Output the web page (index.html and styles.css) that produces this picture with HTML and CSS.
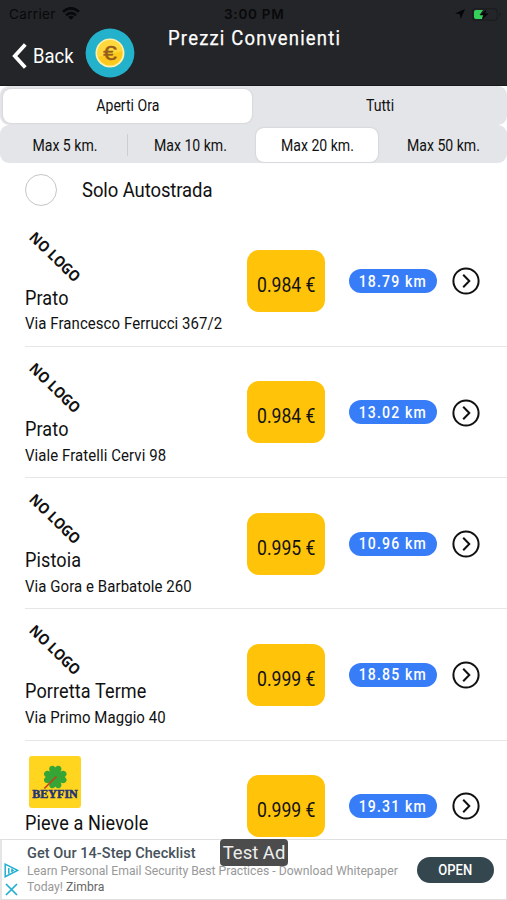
FILE: index.html
```html
<!DOCTYPE html>
<html lang="it">
<head>
<meta charset="utf-8">
<title>Prezzi Convenienti</title>
<link rel="stylesheet" href="styles.css">
</head>
<body>
<div class="app">
  <header class="header">
    <div class="status">
      <span class="carrier">Carrier</span>
      <svg class="wifi" width="18" height="13" viewBox="0 0 18 13"><g fill="none" stroke="#08090a" stroke-width="2.7"><path d="M1 4.8Q9-2.2 17 4.8"/><path d="M4 8.2Q9 3.8 14 8.2"/></g><path d="M9 12.8 6 9.9Q9 7.6 12 9.9Z" fill="#08090a"/></svg>
      <span class="clock">3:00 PM</span>
      <svg class="loc" width="10" height="10" viewBox="0 0 10 10"><path d="M10 0 5.7 10 4.8 5.2 0 4.4Z" fill="#050607"/></svg>
      <svg class="battery" width="29" height="13" viewBox="0 0 29 13"><rect x=".6" y=".6" width="24.5" height="11.6" rx="3" fill="none" stroke="#1b1d1f" stroke-width="1.1"/><path d="M27 4.2Q30 6.4 27 8.7Z" fill="#1b1d1f"/><path d="M4 2H11L7.5 7H11L10 11H4Q2 11 2 9V4Q2 2 4 2Z" fill="#35d05a"/><path d="M14.5 1.5 8 7.3H11.6L10.2 11.6 16.7 5.5H13Z" fill="#050607"/></svg>
    </div>
    <div class="nav">
      <svg class="chevron" width="17" height="28" viewBox="0 0 17 28"><path d="M14.3 2.5 3.8 14 14.3 25.5" fill="none" stroke="#fff" stroke-width="3.8"/></svg>
      <span class="back cond">Back</span>
      <svg class="coin" width="50" height="50" viewBox="0 0 50 50"><circle cx="25" cy="25" r="24.4" fill="#23b1cb"/><circle cx="25" cy="25" r="14.5" fill="#fff0ad"/><circle cx="25" cy="25" r="12.6" fill="#fdc91c"/><path d="M12.5 23A12.6 12.6 0 0 1 37.5 23L13 29Z" fill="#ffd83b"/><text x="25" y="32" text-anchor="middle" textLength="13.5" lengthAdjust="spacingAndGlyphs" class="euro">€</text></svg>
      <h1 class="title cond">Prezzi Convenienti</h1>
    </div>
  </header>
  <div class="segments two">
    <div class="seg on"><span class="cond">Aperti Ora</span></div>
    <div class="seg"><span class="cond">Tutti</span></div>
  </div>
  <div class="segments four">
    <div class="seg line"><span class="cond">Max 5 km.</span></div>
    <div class="seg"><span class="cond">Max 10 km.</span></div>
    <div class="seg on"><span class="cond">Max 20 km.</span></div>
    <div class="seg"><span class="cond">Max 50 km.</span></div>
  </div>
  <div class="option"><span class="radio"></span><span class="option-text cond">Solo Autostrada</span></div>
  <main class="list">
    <article class="row">
      <div class="station"><svg class="logo" viewBox="0 0 54 54"><text class="nologo" transform="translate(0.3 8.6) rotate(44)" textLength="64" lengthAdjust="spacingAndGlyphs">NO LOGO</text></svg><div class="name"><span class="cond">Prato</span></div><div class="addr"><span class="cond">Via Francesco Ferrucci 367/2</span></div></div>
      <div class="price"><span class="cond">0.984 €</span></div><div class="dist"><span class="cond">18.79 km</span></div>
      <svg class="go" viewBox="0 0 28 28"><circle cx="14" cy="14" r="12.6"/><path d="M11.2 7.8 17.3 14 11.2 20.2"/></svg>
    </article>
    <article class="row">
      <div class="station"><svg class="logo" viewBox="0 0 54 54"><text class="nologo" transform="translate(0.3 8.6) rotate(44)" textLength="64" lengthAdjust="spacingAndGlyphs">NO LOGO</text></svg><div class="name"><span class="cond">Prato</span></div><div class="addr"><span class="cond">Viale Fratelli Cervi 98</span></div></div>
      <div class="price"><span class="cond">0.984 €</span></div><div class="dist"><span class="cond">13.02 km</span></div>
      <svg class="go" viewBox="0 0 28 28"><circle cx="14" cy="14" r="12.6"/><path d="M11.2 7.8 17.3 14 11.2 20.2"/></svg>
    </article>
    <article class="row">
      <div class="station"><svg class="logo" viewBox="0 0 54 54"><text class="nologo" transform="translate(0.3 8.6) rotate(44)" textLength="64" lengthAdjust="spacingAndGlyphs">NO LOGO</text></svg><div class="name"><span class="cond">Pistoia</span></div><div class="addr"><span class="cond">Via Gora e Barbatole 260</span></div></div>
      <div class="price"><span class="cond">0.995 €</span></div><div class="dist"><span class="cond">10.96 km</span></div>
      <svg class="go" viewBox="0 0 28 28"><circle cx="14" cy="14" r="12.6"/><path d="M11.2 7.8 17.3 14 11.2 20.2"/></svg>
    </article>
    <article class="row">
      <div class="station"><svg class="logo" viewBox="0 0 54 54"><text class="nologo" transform="translate(0.3 8.6) rotate(44)" textLength="64" lengthAdjust="spacingAndGlyphs">NO LOGO</text></svg><div class="name"><span class="cond">Porretta Terme</span></div><div class="addr"><span class="cond">Via Primo Maggio 40</span></div></div>
      <div class="price"><span class="cond">0.999 €</span></div><div class="dist"><span class="cond">18.85 km</span></div>
      <svg class="go" viewBox="0 0 28 28"><circle cx="14" cy="14" r="12.6"/><path d="M11.2 7.8 17.3 14 11.2 20.2"/></svg>
    </article>
    <article class="row">
      <div class="station"><svg class="logo" viewBox="0 0 54 54"><rect x="1" y="1" width="52" height="52" rx="3" fill="#ffd520"/><g transform="translate(27.3 22)" fill="#35a536"><path id="leaf" d="M0 1C-2-2-7-5-6-9C-5-12-1.500-12 0-9.500C1.500-12 5-12 6-9C7-5 2-2 0 1Z"/><use href="#leaf" transform="rotate(90)"/><use href="#leaf" transform="rotate(180)"/><use href="#leaf" transform="rotate(270)"/></g><path d="M16.300 33.500 28.500 21.500" stroke="#c4401f" stroke-width="1.600"/><text class="beyfin" x="4.300" y="42.800" textLength="45.500" lengthAdjust="spacingAndGlyphs">BEYFIN</text></svg><div class="name"><span class="cond">Pieve a Nievole</span></div></div>
      <div class="price"><span class="cond">0.999 €</span></div><div class="dist"><span class="cond">19.31 km</span></div>
      <svg class="go" viewBox="0 0 28 28"><circle cx="14" cy="14" r="12.6"/><path d="M11.2 7.8 17.3 14 11.2 20.2"/></svg>
    </article>
  </main>
  <aside class="ad">
    <div class="ad-icons">
      <svg width="15" height="15" viewBox="0 0 15 15"><path d="M1.2 1.2 13.6 7.3 1.2 13.7Z" fill="none" stroke="#21aed0" stroke-width="1.5"/><path d="M4.8 5V10.8" stroke="#21aed0" stroke-width="1.5"/><path d="M7.2 5.2 10.4 7.4 7.2 9.6Z" fill="#21aed0"/></svg>
      <svg width="15" height="13" viewBox="0 0 15 13"><path d="M2 1 13 12M13 1 2 12" stroke="#21aed0" stroke-width="1.7"/></svg>
    </div>
    <div class="ad-body">
      <div class="ad-title">Get Our 14-Step Checklist</div>
      <div class="ad-text">Learn Personal Email Security Best Practices - Download Whitepaper</div>
      <div class="ad-text">Today! <span class="brand">Zimbra</span></div>
    </div>
    <div class="open"><span>OPEN</span></div>
    <div class="test">Test Ad</div>
  </aside>
</div>
</body>
</html>
```
FILE: styles.css
```css
* { box-sizing: border-box; }
body { margin: 0; background: #fff; font-family: Roboto, sans-serif; color: #111; }
svg { display: block; flex: none; }
.app { width: 507px; height: 900px; overflow: hidden; position: relative; display: flex; flex-direction: column; }
.cond { display: inline-block; white-space: nowrap; font-family: Roboto, sans-serif; transform: scaleX(.88); transform-origin: center; }
.header { height: 86px; flex: none; background: #232528; border-bottom: 1px solid #18191b; }
.status { height: 28px; display: flex; align-items: center; color: #08090a; font: 13.5px Inter, sans-serif; }
.carrier { width: 48px; margin-left: 9px; letter-spacing: .35px; }
.wifi { margin-left: 5px; margin-top: -2px; }
.clock { width: 62px; margin-left: 144px; font-weight: 600; font-size: 13.5px; letter-spacing: .75px; white-space: nowrap; }
.loc { margin-left: 169px; }
.battery { margin-left: 7px; }
.nav { display: flex; height: 57px; color: #fff; }
.chevron { margin: 14px 0 0 11px; }
.back { width: 46px; margin: 15px 0 0 5px; font-size: 21px; line-height: 26px; transform-origin: left; }
.coin { margin: 0 0 0 6px; }
.euro { font: 20px "Liberation Sans", sans-serif; fill: #955c1c; stroke: #955c1c; stroke-width: .5; }
.title { margin: -3px 0 0 33px; font-size: 21px; font-weight: 400; -webkit-text-stroke: .25px #fff; line-height: 26px; letter-spacing: 1.36px; transform-origin: left; }
.segments { display: grid; background: #e4e5e8; border-radius: 9px; font-size: 16px; flex: none; }
.two { grid-template-columns: 249px 1fr; height: 39px; padding: 3px 0 2px 3px; }
.two .cond { margin-top: -2px; }
.four { grid-template-columns: 126px 128px 122px 1fr; height: 38px; padding: 3px 0 1px 2px; }
.four .seg:nth-child(2) { padding-right: 3px; }
.four .seg:nth-child(4) { padding-left: 2px; }
.seg { display: flex; align-items: center; justify-content: center; border-radius: 8px; }
.seg.on { background: #fff; box-shadow: 0 0 2px #bbbcc0; }
.seg.line { border-right: 1px solid #cdced1; border-radius: 0; margin: 6px 0; }
.option { height: 52px; flex: none; display: flex; align-items: center; padding: 2px 0 0 25px; }
.radio { width: 32px; height: 32px; border: 1px solid #c6c6c6; border-radius: 50%; }
.option-text { margin-left: 25px; font-size: 21px; letter-spacing: -.1px; transform-origin: left; }
.list { flex: none; }
.row { height: 131.25px; margin-left: 25px; border-bottom: 1px solid #e6e6e7; display: grid; grid-template-columns: 222px 78px 88px 28px; align-items: start; position: relative; top: .6px; }
.station { padding-top: 14px; }
.logo { width: 54px; height: 54px; margin-left: 2.5px; overflow: visible; }
.nologo { font: bold 15px "Open Sans", sans-serif; fill: #111; }
.beyfin { font: bold 12px "Liberation Serif", serif; fill: #233475; stroke: #233475; stroke-width: .5; }
.name { font-size: 20.5px; line-height: 26px; height: 27.5px; padding-top: 1px; letter-spacing: .13px; }
.addr { font-size: 17px; line-height: 24px; padding-top: .3px; letter-spacing: .09px; }
.name .cond, .addr .cond { transform-origin: left; }
.price { height: 62px; margin-top: 34.5px; border-radius: 12px; background: #ffc409; display: flex; align-items: center; justify-content: center; padding-top: 8px; font-size: 20px; }
.dist { width: 88px; height: 24px; margin: 53.6px 0 0 24px; border-radius: 12px; background: #387df8; color: #fff; display: flex; align-items: center; justify-content: center; font-size: 16px; font-weight: 500; letter-spacing: 1.3px; }
.go { width: 28px; height: 28px; margin: 51.7px 0 0 39px; fill: none; stroke: #111; stroke-width: 2; }
.ad { position: absolute; left: 0; right: 0; bottom: 0; height: 61px; background: #fff; border: 1px solid #dfdfe0; border-left: 2px solid #e5e5e6; display: flex; font-family: Roboto, sans-serif; }
.ad-icons { width: 25px; padding: 23px 0 0 2px; display: flex; flex-direction: column; gap: 5px; }
.ad-body { width: 389px; padding-top: 4px; white-space: nowrap; }
.ad-title { font-size: 14.5px; font-weight: 500; line-height: 19px; color: #46525a; letter-spacing: .05px; }
.ad-text { font-size: 12.2px; line-height: 16px; color: #999; }
.brand { color: #666; }
.open { width: 77px; height: 26px; margin: 17px 0 0 1px; border-radius: 13px; background: #34474e; color: #fff; font-size: 14px; font-weight: 500; display: flex; align-items: center; justify-content: center; }
.open span { transform: scaleX(.93); }
.test { position: absolute; left: 218px; top: -1px; width: 68px; height: 27px; border-radius: 4px; background: #4c4c4c; color: #eee; font-size: 18.5px; line-height: 28px; text-align: center; white-space: nowrap; }
```
